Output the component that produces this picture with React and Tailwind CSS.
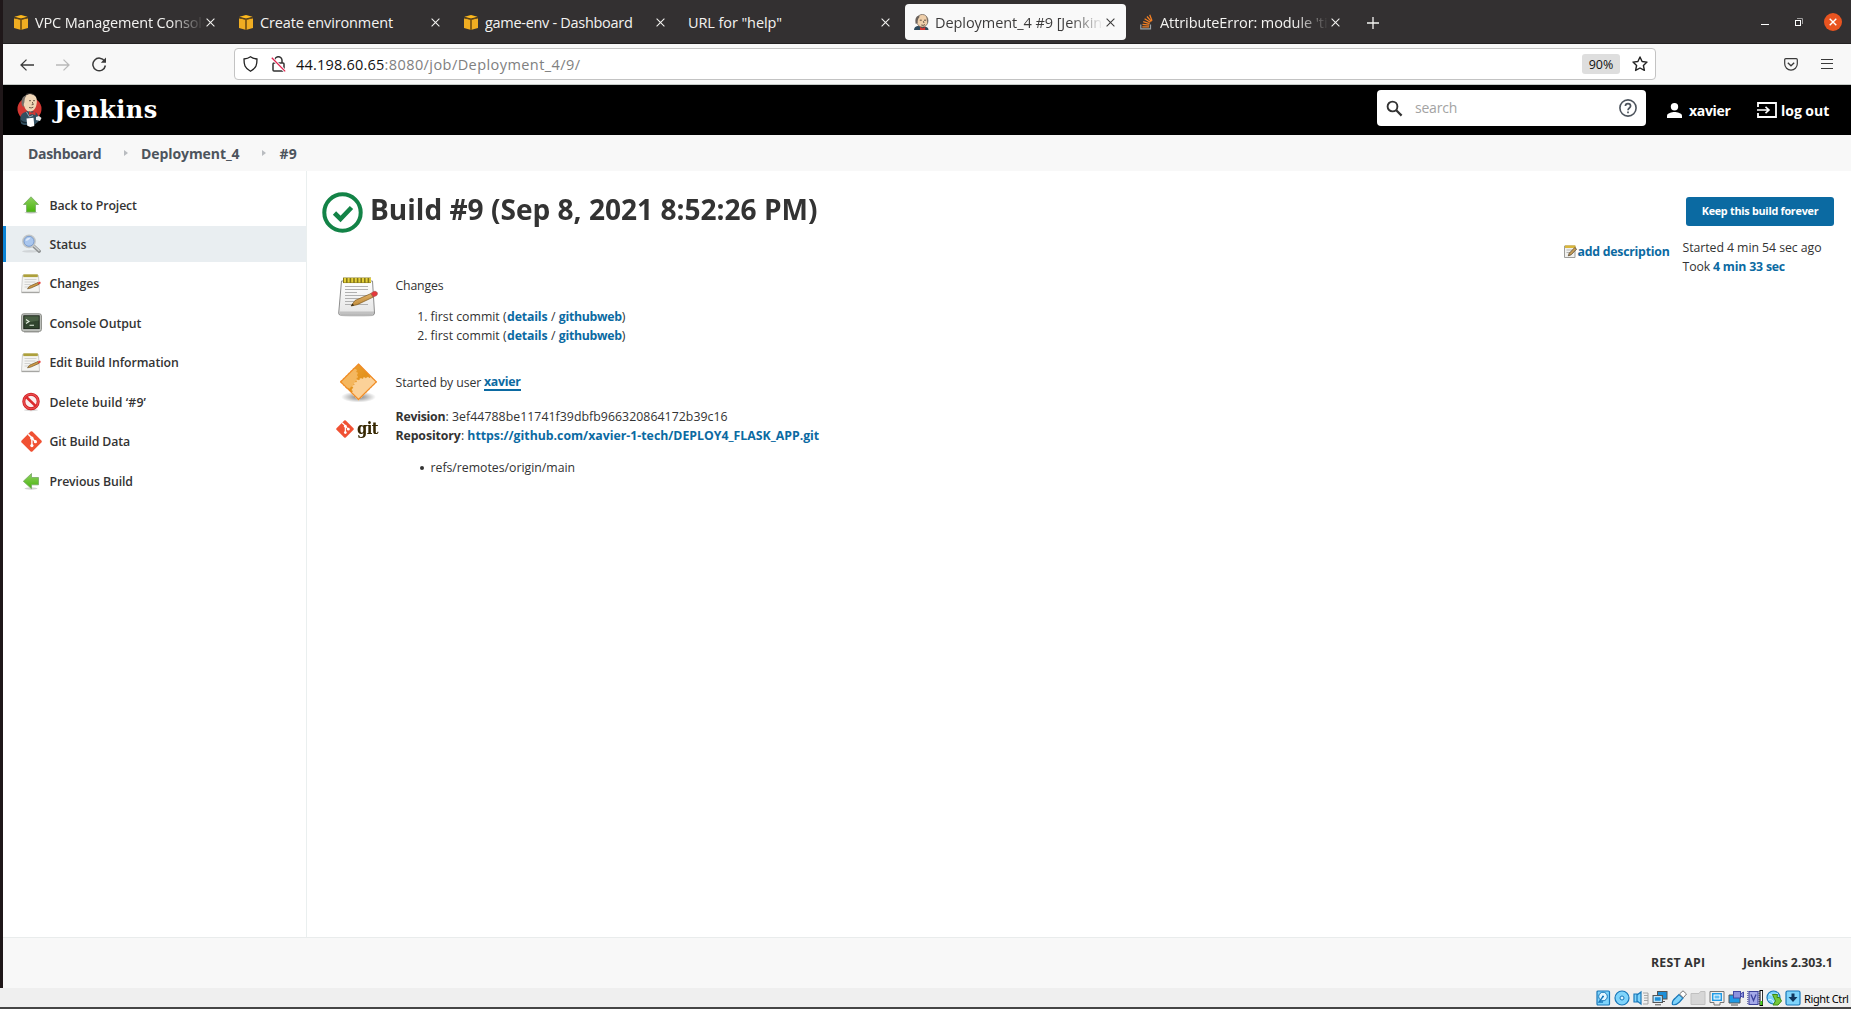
import React from "react";

const AwsCube = () => (
  <svg width="14" height="15" viewBox="0 0 14 15" className="shrink-0">
    <path d="M0 3.2 6.4 4.4v10.4L0 13z" fill="#f0ad22" />
    <path d="M14 3.2 7.6 4.4v10.4L14 13z" fill="#f0ad22" />
    <path d="M7 0l6.6 1.800L7 3.600.4 1.800z" fill="#ffb91c" />
    <path d="M6.200 4.200h1.600V15H6.200z" fill="#8d6010" />
    <path d="M0 2.200 7 4l7-1.800v1L7 4.900 0 3.200z" fill="#6b4a12" />
  </svg>
);

const JenkinsHead = () => (
  <svg width="15" height="16" viewBox="0 0 15 16" className="shrink-0">
    <path d="M0 16c0-2.500 1.500-3.500 3.500-4l7 .5c3 .5 4 1.500 4 3.500z" fill="#2f4a5c" />
    <ellipse cx="8.300" cy="6.800" rx="5.700" ry="6.400" fill="#efcfaa" stroke="#4b4038" strokeWidth=".6" />
    <path d="M5 1.500C1.500 2.300.8 6 1.800 10l1.700-1C3.500 6.500 4 4.500 5.500 3zM12.500 2.500c1.700 2.200 1.600 4.500.8 7L12.800 6z" fill="#6a625c" />
    <path d="M5.800 6.200h2M10 6.200h2M9.300 7.200l.7 1.800M7.300 11q2 .9 3.700-.4" stroke="#3f332b" strokeWidth=".8" fill="none" />
    <path d="M6 13l2.600 1.300 2.600-1.300v3H6z" fill="#d33833" />
  </svg>
);

const JenkinsLogo = () => (
  <svg width="25" height="34" viewBox="0 0 25 34" className="shrink-0">
    <ellipse cx="12.500" cy="16" rx="12" ry="11.500" fill="#d33833" />
    <path d="M4.500 31c-2-4-1.500-9 1.500-11l6-2.500 6 1.500c3.500 2 4 5 3.500 9.500L17 32H7z" fill="#335061" />
    <path d="M6.500 6c1-3.800 5-5.300 8.300-4.800 4 .8 5.500 4 5 8.300-.5 5-2.300 8-6 9-3 .5-5.800-2-6.500-5.300C5.800 12 5.200 8.500 6.500 6z" fill="#f0d6b7" />
    <path d="M8.500 2.500C4.500 4 4 8 5 12.500L7 14.500c-.3-2-.5-3.500.3-5C7.800 7 7.500 4.500 9.500 2.800z" fill="#77706a" />
    <path d="M9 1.500c3-1.600 7.500-1 9.500 2" stroke="#5b5450" strokeWidth=".7" fill="none" />
    <path d="M12 7.700h2M16 7.700h2M15.300 9l1 2.500-1.700.3M12 14.500q2.300 1 4.300-.3" stroke="#4b382c" strokeWidth=".8" fill="none" />
    <path d="M12 18.300l3 1.400 3.500-1.500v4l-3.500-1.200-3 1.300z" fill="#d33833" />
    <path d="M9.500 19l3 5 3.500-1.500" stroke="#c7d0d5" strokeWidth=".7" fill="none" />
    <path d="M9.500 25.500l7-.8.8 8.300-4 1-3-1.200z" fill="#fff" />
    <path d="M19 24l3-1 2.500 2-1.500 3-4-1z" fill="#e9eef0" />
    <path d="M3 27c2 2 4 3 6.500 2.500" stroke="#17262f" strokeWidth="1.100" fill="none" />
  </svg>
);

const StackOverflow = () => (
  <svg width="13" height="16" viewBox="0 0 13 16" className="shrink-0">
    <path d="M.8 10.500v4.300h9.700v-4.300" fill="none" stroke="#9aa3a8" strokeWidth="1.200" />
    <path d="M2.300 12.800h6.700M2.500 10.400l6.700.8M3.200 7.600l6.400 2M4.600 4.800l5.700 3.500M7 2.500l4.400 5M9.700.7l2.300 6" stroke="#f48024" strokeWidth="1.300" fill="none" />
  </svg>
);

const Cross = ({ className }) => (
  <svg width="9" height="9" viewBox="0 0 9 9" className={className}>
    <path d="M.6.6l7.800 7.800M8.400.6L.6 8.400" stroke="currentColor" strokeWidth="1.050" fill="none" />
  </svg>
);

const Tab = ({ icon, children, active, text }) => (
  <div className="flex h-9 w-[225px] shrink-0 pr-1">
    <div className={"flex w-[221px] items-center rounded " + (active ? "bg-[#f9f9f9] text-[#3d3c3c] " : "text-[#f4f3f1] ") + (icon ? "pl-[9px]" : "pl-[8px]")}>
      {icon && <span className="mr-[7px] flex w-[14px] justify-center">{icon}</span>}
      <span className={"min-w-0 flex-1 overflow-hidden pt-[2px] text-[14.5px] leading-5 whitespace-nowrap " + text}>{children}</span>
      <Cross className="mr-[11px] ml-[2px] shrink-0" />
    </div>
  </div>
);

const FADE = "[mask-image:linear-gradient(to_right,black_80%,transparent_100%)]";

const Notepad = ({ size }) => (
  <svg width={size} height={size} viewBox="0 0 40 40" className="block shrink-0">
    <defs>
      <linearGradient id="paper" x1="0" y1="0" x2="0" y2="1">
        <stop offset="0" stopColor="#ffffff" />
        <stop offset="1" stopColor="#e4e4e4" />
      </linearGradient>
      <linearGradient id="pencil" x1="0" y1="0" x2=".4" y2="1">
        <stop offset="0" stopColor="#f0c584" />
        <stop offset="1" stopColor="#bb8530" />
      </linearGradient>
    </defs>
    <ellipse cx="19" cy="38.500" rx="17" ry="1.300" fill="#000" opacity=".12" />
    <path d="M3.500 4h31l2 32q0 2-2 2H2.500q-2 0-1.800-2z" fill="url(#paper)" stroke="#8d8d8d" strokeWidth="1" />
    <path d="M1.500 34.500h34.500v2.500H1.500z" fill="#a8a8a8" opacity=".6" />
    <path d="M7 9.500h23M7 12.500h23M7 15.500h12M7 18.500h23M7 21.500h17M7 24.500h10M7 27.500h23" stroke="#a8a8a8" strokeWidth=".9" />
    <path d="M5 3.300h28" stroke="#857719" strokeWidth="5.500" />
    <path d="M6 3.300h27" stroke="#e3cf3a" strokeWidth="4.500" strokeDasharray="2 1.600" />
    <path d="M13 29l4-5.500 16-7 2.200 3.600-16 7.600z" fill="url(#pencil)" stroke="#80591c" strokeWidth=".7" />
    <path d="M13 29l1.700-2.400 1.300 1.900z" fill="#2d2517" />
    <path d="M33 16.300l2.500-1.700c2-1 4 .3 4 2.300l-.8 1.600-3.500 1.500z" fill="#e5383b" stroke="#9d5a50" strokeWidth=".6" />
  </svg>
);

const SmallNotepad = () => (
  <svg width="20" height="20" viewBox="0 0 20 20" className="block shrink-0">
    <path d="M1.500 1.500h16l1 16.500H.5z" fill="#f4f4f2" stroke="#c2c2c0" strokeWidth=".8" />
    <path d="M.5 18.600h18" stroke="#a3a3a0" strokeWidth="1.100" />
    <path d="M2.300 1.700h14.500" stroke="#ada03c" strokeWidth="2.800" />
    <path d="M3.500 5.500h12M3.500 8h11M3.500 10.500h6M3.500 13h4" stroke="#c9c9c6" strokeWidth=".8" />
    <path d="M6.500 14.800l2-2.600 8.500-3.700 1 1.900-8.200 3.700z" fill="#cf9a45" stroke="#6f5426" strokeWidth=".7" />
    <path d="M17 8.400l2-.9q1 .8.600 2l-1.800.9z" fill="#e8403c" />
  </svg>
);

const GreenArrow = ({ left }) => (
  <svg width="20" height="20" viewBox="0 0 20 20" className="block shrink-0">
    <defs>
      <linearGradient id="green" x1="0" y1="0" x2="0" y2="1">
        <stop offset="0" stopColor="#8fd060" />
        <stop offset="1" stopColor="#48b50c" />
      </linearGradient>
    </defs>
    <ellipse cx="10" cy="17.500" rx="6.500" ry="1.200" fill="#000" opacity=".18" />
    {left ? (
      <path d="M2.300 10.300L10.500 2.500v4h7v7.300h-7v3.900z" fill="url(#green)" stroke="#77a865" strokeWidth=".8" />
    ) : (
      <path d="M10 1.800l7.500 7.700H14.500v7.500H5.500V9.500H2.500z" fill="url(#green)" stroke="#77a865" strokeWidth=".8" />
    )}
  </svg>
);

const Magnifier = () => (
  <svg width="20" height="20" viewBox="0 0 20 20" className="block shrink-0">
    <ellipse cx="9" cy="17.300" rx="8" ry="1.300" fill="#000" opacity=".1" />
    <path d="M12.500 12l5.700 5.200" stroke="#8e9192" strokeWidth="3.400" strokeLinecap="round" />
    <path d="M13 12l5 4.600" stroke="#cfd2d2" strokeWidth="1.300" strokeLinecap="round" />
    <circle cx="8" cy="7.300" r="6" fill="#a9c6ee" stroke="#c3c6c6" strokeWidth="1.800" />
    <circle cx="8" cy="7.300" r="5" fill="none" stroke="#6f93c9" strokeWidth=".8" />
    <path d="M4.500 7c.5-2.500 2.500-3.600 5-3.200-1 2-3 3.200-5 3.200z" fill="#dce9fa" />
  </svg>
);

const Terminal = () => (
  <svg width="21" height="20" viewBox="0 0 21 20" className="block shrink-0">
    <rect x=".6" y=".8" width="19.800" height="17.600" rx="2" fill="#c4c6c2" stroke="#888a85" strokeWidth="1" />
    <path d="M3 19.300h15" stroke="#9a9a98" strokeWidth="1" opacity=".6" />
    <rect x="2.800" y="2.800" width="15.400" height="12.800" fill="#31442e" stroke="#1d261b" strokeWidth="1" />
    <path d="M3.300 3.300h14.400v4.200L3.300 10z" fill="#587052" opacity=".6" />
    <path d="M5 6.500l3 2-3 2M8.500 12.300h4.500" stroke="#e6efe2" strokeWidth="1.100" fill="none" />
  </svg>
);

const Forbidden = () => (
  <svg width="20" height="20" viewBox="0 0 20 20" className="block shrink-0">
    <ellipse cx="10" cy="18" rx="7" ry="1.200" fill="#000" opacity=".15" />
    <circle cx="10" cy="9.500" r="7.200" fill="#fbeeee" stroke="#c9171b" strokeWidth="3" />
    <circle cx="10" cy="9.500" r="7.200" fill="none" stroke="#e94a4c" strokeWidth="1.600" />
    <path d="M5 4.800l10 9.600" stroke="#dc2a2d" strokeWidth="2.600" />
  </svg>
);

const GitMark = ({ size }) => (
  <svg width={size} height={size} viewBox="0 0 21 21" className="block shrink-0">
    <path d="M9.600.6q.9-.8 1.800 0l9 9q.8.900 0 1.800l-9 9q-.9.800-1.800 0l-9-9q-.8-.9 0-1.800z" fill="#f05133" />
    <path d="M7.200 3.200l3.700 3.700v7.800M10.900 7.200l3.400 3.400" stroke="#fff" strokeWidth="1.400" fill="none" />
    <circle cx="10.900" cy="7.200" r="1.600" fill="#fff" />
    <circle cx="10.900" cy="14.600" r="1.600" fill="#fff" />
    <circle cx="14.400" cy="10.700" r="1.600" fill="#fff" />
  </svg>
);

const OrangeDiamond = () => (
  <svg width="37" height="40" viewBox="0 0 36 40" preserveAspectRatio="none" className="block shrink-0">
    <defs>
      <linearGradient id="amber" x1="0" y1="0" x2="1" y2="1">
        <stop offset="0" stopColor="#f0a63c" />
        <stop offset=".5" stopColor="#e3921c" />
        <stop offset="1" stopColor="#efa84c" />
      </linearGradient>
      <radialGradient id="shade">
        <stop offset="0" stopColor="#000" stopOpacity=".5" />
        <stop offset="1" stopColor="#000" stopOpacity="0" />
      </radialGradient>
    </defs>
    <ellipse cx="18" cy="34" rx="17" ry="5.500" fill="url(#shade)" />
    <path d="M18 1l17.300 17.800L18 36.500.7 18.800z" fill="url(#amber)" />
    <path d="M.7 18.800L14 5.200c3 3 3.500 9 1 13.500-2 4-5 6.300-8.300 6.300z" fill="#f4b75f" stroke="#f4b75f" strokeWidth="1.600" strokeDasharray="2 1.400" />
    <path d="M12.500 31c-1-6 1.500-12 7-14.500 4-1.800 8-1.500 11.200-1.500l4.600 3.800L18 36.500z" fill="#fbd198" stroke="#fbd198" strokeWidth="1.800" strokeDasharray="2 1.400" />
    <path d="M18 1l17.300 17.800L18 36.500.7 18.800z" fill="none" stroke="#f08a24" strokeWidth="1.200" />
  </svg>
);

const EditIcon = () => (
  <svg width="13" height="13" viewBox="0 0 13 13" className="mt-[3px] block shrink-0">
    <path d="M.5 1h10.500v11.500H.5z" fill="#f1f1ef" stroke="#9d9d9a" />
    <path d="M1 1.700h10.500" stroke="#d9b63c" strokeWidth="2.600" />
    <path d="M2.500 5h6M2.500 7.500h4" stroke="#b5b5b2" />
    <path d="M4.300 10.800l1-2.600L10.800 2.500l1.800 1.600-5.500 5.700z" fill="#c9a15a" stroke="#54412a" strokeWidth=".8" />
  </svg>
);

const SIDE = [
  [<GreenArrow />, "Back to Project", "tracking-[-0.11px]"],
  [<Magnifier />, "Status", "tracking-[-0.07px]", true],
  [<SmallNotepad />, "Changes", "tracking-[-0.13px]"],
  [<Terminal />, "Console Output", "tracking-[-0.09px]"],
  [<SmallNotepad />, "Edit Build Information", "tracking-[-0.08px]"],
  [<Forbidden />, "Delete build ‘#9’", "tracking-[0.11px]"],
  [<GitMark size={21} />, "Git Build Data", "tracking-[-0.12px]"],
  [<GreenArrow left />, "Previous Build", "tracking-[-0.11px]"],
];

const Link = ({ className = "", children }) => <a className={"font-bold text-[#0b6aa2] " + className}>{children}</a>;

const Commit = ({ n }) => (
  <li className="flex h-[19px] whitespace-pre">
    <span className="w-[35px] pr-[3px] text-right">{n}.</span>
    <span className="w-[76.500px]">first commit (</span>
    <Link className="w-[40.500px] tracking-[-0.15px]">details</Link>
    <span className="w-[11.300px] text-center">/</span>
    <Link className="w-[63px] tracking-[-0.28px]">githubweb</Link>
    <span>)</span>
  </li>
);

const VBoxIcons = () => {
  const s = { fill: "#7fd4fb", stroke: "#1877b9", strokeWidth: 1.2 };
  return (
    <div className="flex h-4 shrink-0 gap-[3px]">
      <svg width="16" height="16" viewBox="0 0 16 16">
        <rect x="2" y="1" width="12.500" height="14" rx="1" {...s} />
        <circle cx="8" cy="6.500" r="4.300" fill="#e3f6ff" stroke="#1877b9" />
        <path d="M8 6.500l-4 5.500h4M7 6.500h2" stroke="#1877b9" strokeWidth="1.300" fill="none" />
      </svg>
      <svg width="16" height="16" viewBox="0 0 16 16">
        <circle cx="8" cy="8" r="7" {...s} />
        <circle cx="8" cy="8" r="2" fill="#dff5ff" stroke="#1877b9" />
      </svg>
      <svg width="16" height="16" viewBox="0 0 16 16">
        <path d="M10 3h5v11h-5M11 5.500h4M11 8h4M11 10.500h4" fill="none" stroke="#a5a5a5" />
        <path d="M1 4h3v8H1zM4 5l4-3v12l-4-3z" {...s} />
      </svg>
      <svg width="16" height="16" viewBox="0 0 16 16">
        <rect x="5.500" y="1.500" width="9.500" height="7.500" fill="#1d8fd8" stroke="#555" />
        <path d="M9 11.500h4" stroke="#555" />
        <rect x="1" y="5.500" width="9.500" height="7" fill="#1d8fd8" stroke="#555" />
        <rect x="2.200" y="6.700" width="7" height="4.600" fill="none" stroke="#e9f7ff" />
        <path d="M3 14.800h6" stroke="#555" />
      </svg>
      <svg width="16" height="16" viewBox="0 0 16 16">
        <path d="M1.500 14.500c-1-3 1-5 3.500-7l3-3L12 8l-3.500 4c-2 2-4 3.500-7 2.500z" {...s} />
        <path d="M8.500 4L12 .8 15.500 4 12.300 7.800z" fill="#fff" stroke="#777" />
      </svg>
      <svg width="16" height="16" viewBox="0 0 16 16">
        <path d="M1 3.500h8l1.500-2H15v13H1z" fill="#d6d6d6" stroke="#c0c0c0" />
      </svg>
      <svg width="16" height="16" viewBox="0 0 16 16">
        <path d="M1 1.500h14v11H11v2.500H5v-2.500H1z" fill="#efefef" stroke="#777" />
        <rect x="3" y="3" width="10" height="8" fill="#1f9be6" />
        <rect x="5" y="5" width="6" height="4" fill="#5fbff5" stroke="#fff" />
      </svg>
      <svg width="16" height="16" viewBox="0 0 16 16">
        <path d="M1 5h11v8H1zM3 15h7" fill="#1f9be6" stroke="#555" />
        <rect x="5.500" y="1.500" width="7" height="6.500" fill="#8c92de" stroke="#4348a5" />
        <path d="M12.500 4l3-2v5.500l-3-1.500z" fill="#8c92de" stroke="#4348a5" />
      </svg>
      <svg width="16" height="16" viewBox="0 0 16 16">
        <rect x="2" y="1.500" width="9" height="13" fill="#a5a9e8" stroke="#3d429c" />
        <path d="M.8 1v14M12 1v14" stroke="#3d429c" strokeDasharray="1 1" />
        <path d="M4 4.500l2.500 6 2.500-6" stroke="#3d429c" strokeWidth="1.300" fill="none" />
        <rect x="13" y=".5" width="2.700" height="15" fill="#fff" stroke="#000" />
        <path d="M14.400 11v4" stroke="#3fd60e" strokeWidth="1.800" />
      </svg>
      <svg width="16" height="16" viewBox="0 0 16 16">
        <circle cx="7.500" cy="7.500" r="6.500" {...s} />
        <path d="M3 4q4 3 9-1M2 10q4-2 6 3" stroke="#d9f2ff" fill="none" />
        <path d="M6.500 4.500h5l-.5 3 2.500 0 2 3.500-3.500 4H7l2.500-4z" fill="#74c83a" stroke="#3c8a14" />
      </svg>
      <svg width="16" height="16" viewBox="0 0 16 16">
        <rect x="1" y="1" width="14" height="14" rx="1.500" {...s} />
        <path d="M6.500 3.500h3V7h3L8 12 3.500 7h3z" fill="#12365c" />
      </svg>
    </div>
  );
};

export default function App() {
  return (
    <div className="flex h-[1009px] w-[1851px] flex-col overflow-hidden bg-[#efefef] font-['Open_Sans','Noto_Sans',sans-serif] text-[12.3px] leading-[19px] text-[#333]">
      <div className="flex h-[988px]">
        <div className="w-[3px] bg-[#1f1719]" />
        <div className="flex min-w-0 flex-1 flex-col bg-white">
          {/* Tab strip */}
          <div className="flex h-11 items-start border-b border-[#232122] bg-[#333031] pt-1 pl-[2px] text-[#f4f3f1]">
            <Tab icon={<AwsCube />} text={"tracking-[-0.14px] " + FADE}>VPC Management Console</Tab>
            <Tab icon={<AwsCube />} text="tracking-[-0.14px]">Create environment</Tab>
            <Tab icon={<AwsCube />} text="tracking-[-0.3px]">game-env - Dashboard</Tab>
            <Tab text="tracking-[-0.09px]">URL for "help"</Tab>
            <Tab icon={<JenkinsHead />} active text={"tracking-[-0.06px] " + FADE}>Deployment_4 #9 [Jenkins]</Tab>
            <Tab icon={<StackOverflow />} text={"tracking-[-0.09px] " + FADE}>AttributeError: module 'time'</Tab>
            <svg width="12" height="12" viewBox="0 0 12 12" className="mt-[13px] ml-[12px]">
              <path d="M6 0v12M0 6h12" stroke="currentColor" strokeWidth="1.300" />
            </svg>
            <div className="mt-[9px] mr-[9px] ml-auto flex items-center">
              <span className="mt-[4px] mr-[26px] h-px w-2 bg-white" />
              <svg width="8" height="8" viewBox="0 0 8 8" className="mr-[21px]">
                <path d="M2 .5h5.500V6" stroke="#a09e9e" fill="none" />
                <rect x=".5" y="2.500" width="5" height="5" stroke="#fff" fill="none" />
              </svg>
              <span className="flex size-[18px] items-center justify-center rounded-full bg-[#e95420]">
                <svg width="8" height="8" viewBox="0 0 8 8"><path d="M.7.7l6.600 6.600M7.300.7L.7 7.300" stroke="#fff" strokeWidth="1.400" /></svg>
              </span>
            </div>
          </div>

          {/* Toolbar */}
          <div className="flex h-[41px] items-start border-b border-[#c4c9c6] bg-[#f8f8f8] pt-1 pr-[18px] pl-[17px] text-[#3a3a3a]">
            <svg width="14" height="12" viewBox="0 0 14 12" className="mt-[11px] mr-[22px]">
              <path d="M14 6H1M6.500.6L1 6l5.500 5.400" stroke="currentColor" strokeWidth="1.300" fill="none" />
            </svg>
            <svg width="14" height="12" viewBox="0 0 14 12" className="mt-[11px] mr-[22px] text-[#b9b9b9]">
              <path d="M0 6h13M7.500.6L13 6l-5.500 5.400" stroke="currentColor" strokeWidth="1.300" fill="none" />
            </svg>
            <svg width="15" height="15" viewBox="0 0 15 15" className="mt-[9px] mr-[127px]">
              <path d="M12.600 4.200A6.300 6.300 0 1 0 13.400 8.500" stroke="currentColor" strokeWidth="1.500" fill="none" />
              <path d="M14 .6v5.200H8.800z" fill="currentColor" />
            </svg>
            <div className="flex h-8 w-[1422px] items-center rounded border border-[#c3c3c3] bg-white pl-2 text-[14.5px]">
              <svg width="15" height="16" viewBox="0 0 15 16" className="mr-[13px] -ml-[0.5px] text-[#222]">
                <path d="M7.500.8c2 1.500 4 2 6.500 2.200 0 5.500-.5 9-6.500 12.200C1.500 12 1 8.500 1 3 3.500 2.800 5.500 2.300 7.500.8z" stroke="currentColor" strokeWidth="1.300" fill="none" />
              </svg>
              <svg width="15" height="16" viewBox="0 0 15 16" className="mr-[10.5px] text-[#333]">
                <path d="M3.800 7V4.300a3.600 3.600 0 0 1 7.200 0V7" stroke="currentColor" strokeWidth="1.500" fill="none" />
                <rect x="2" y="7" width="11" height="8" rx="1" stroke="currentColor" strokeWidth="1.500" fill="none" />
                <path d="M.8 1.800l13.400 13.600" stroke="#fff" strokeWidth="3" />
                <path d="M.8 1.800l13.400 13.600" stroke="#e0224e" strokeWidth="1.300" />
              </svg>
              <span className="w-[88.500px] tracking-[0.2px] text-[#111]">44.198.60.65</span>
              <span className="tracking-[0.43px] text-[#808080]">:8080/job/Deployment_4/9/</span>
              <span className="mr-3 ml-auto flex h-5 w-[38px] items-center justify-center rounded-[3px] bg-[#dedede] text-[12.5px] text-[#111]">90%</span>
              <svg width="16" height="16" viewBox="0 0 16 16" className="mr-[7px] text-[#222]">
                <path d="M8 1l2.100 4.500 4.900.6-3.600 3.400 1 4.900L8 12l-4.400 2.400 1-4.900L1 6.100l4.900-.6z" stroke="currentColor" strokeWidth="1.400" fill="none" strokeLinejoin="round" />
              </svg>
            </div>
            <svg width="14" height="13" viewBox="0 0 14 13" className="mt-[10px] mr-[23px] ml-auto">
              <path d="M1.800.7h10.400q1.100 0 1.100 1.100v4a6.300 6.300 0 0 1-12.600 0v-4q0-1.100 1.100-1.100z" stroke="currentColor" strokeWidth="1.200" fill="none" />
              <path d="M3.800 4.800L7 7.800l3.200-3" stroke="currentColor" strokeWidth="1.300" fill="none" />
            </svg>
            <svg width="12" height="10" viewBox="0 0 12 10" className="mt-[11px]">
              <path d="M0 .5h12M0 4.500h12M0 9.500h12" stroke="currentColor" strokeWidth="1.100" />
            </svg>
          </div>

          {/* Header */}
          <div className="flex h-[50px] items-center bg-black pr-[22px] pl-[14px] text-white">
            <JenkinsLogo />
            <span className="ml-[12px] font-['DejaVu_Serif',serif] text-[24px] leading-8 font-bold tracking-[0.4px]">Jenkins</span>
            <div className="mr-[21px] mb-[4px] ml-auto flex h-9 w-[269px] items-center rounded bg-white pl-[9px] text-[14px] text-[#a3a3a3]">
              <svg width="17" height="17" viewBox="0 0 17 17" className="mr-3 text-[#333]">
                <circle cx="6.500" cy="6.500" r="4.900" stroke="currentColor" strokeWidth="1.900" fill="none" />
                <path d="M10 10l5.600 5.600" stroke="currentColor" strokeWidth="2.200" />
              </svg>
              <span className="pb-[2px] tracking-[-0.22px]">search</span>
              <svg width="18" height="18" viewBox="0 0 18 18" className="mr-[9px] ml-auto text-[#4d545d]">
                <circle cx="9" cy="9" r="8.100" stroke="currentColor" strokeWidth="1.600" fill="none" />
                <path d="M6.400 7.100c0-3.400 5.200-3.400 5.200 0 0 1.900-2.600 2-2.600 4.200M9 12.400v1.800" stroke="currentColor" strokeWidth="1.700" fill="none" />
              </svg>
            </div>
            <svg width="15" height="15" viewBox="0 0 15 15" className="mr-[7px]">
              <circle cx="7.500" cy="3.700" r="3.700" fill="#fff" />
              <path d="M0 15v-2.300c0-2.500 5-3.700 7.500-3.700s7.500 1.200 7.500 3.700V15z" fill="#fff" />
            </svg>
            <span className="w-[68px] text-[14px] font-bold tracking-[-0.32px]">xavier</span>
            <svg width="20" height="16" viewBox="0 0 20 16" className="mr-[4px]">
              <path d="M1 5V1h18v14H1v-4" stroke="#fff" strokeWidth="1.800" fill="none" />
              <path d="M0 8h11M8.500 4.800L12 8l-3.500 3.200" stroke="#fff" strokeWidth="1.600" fill="none" />
            </svg>
            <span className="w-[48px] text-[14px] font-bold tracking-[-0.03px] whitespace-nowrap">log out</span>
          </div>

          {/* Breadcrumbs */}
          <div className="flex h-9 items-center bg-[#f8f8f8] pl-[25px] text-[14px] font-bold text-[#4d545d]">
            <span className="w-[95.500px] tracking-[-0.33px]">Dashboard</span>
            <svg width="4" height="6" viewBox="0 0 4 6" className="mr-[13.500px]"><path d="M0 0l4 3-4 3z" fill="#b9bcc0" /></svg>
            <span className="w-[120.500px] tracking-[-0.08px]">Deployment_4</span>
            <svg width="4" height="6" viewBox="0 0 4 6" className="mr-[14px]"><path d="M0 0l4 3-4 3z" fill="#b9bcc0" /></svg>
            <span className="tracking-[0.3px]">#9</span>
          </div>

          <div className="flex flex-1">
            {/* Side panel */}
            <div className="flex w-[304px] flex-col gap-[3.450px] border-r border-[#eaefef] pt-4">
              {SIDE.map(([icon, label, tr, active]) => (
                <div key={label} className={"flex h-9 items-center border-l-[3px] pl-[15px] font-semibold " + (active ? "border-[#0b84d6] bg-[#e9eef1]" : "border-transparent")}>
                  <span className="flex w-[21px]">{icon}</span>
                  <span className={"ml-[7.500px] " + tr}>{label}</span>
                </div>
              ))}
            </div>

            {/* Main panel */}
            <div className="flex flex-1 justify-between pr-[17px] pl-[14px]">
              <div className="w-[700px] pt-[21px]">
                <div className="flex h-[41px]">
                  <svg width="41" height="41" viewBox="0 0 41 41" className="ml-[0.500px] shrink-0">
                    <ellipse cx="20.500" cy="20.500" rx="18.200" ry="18.300" stroke="#138347" strokeWidth="4" fill="none" />
                    <path d="M12.500 21l6 6L29.500 15.500" stroke="#138347" strokeWidth="4.600" fill="none" />
                  </svg>
                  <h1 className="ml-[7px] h-[41px] origin-left scale-x-[.955] text-[29.400px] leading-[34px] font-bold whitespace-nowrap">Build #9 (Sep 8, 2021 8:52:26 PM)</h1>
                </div>
                <div className="mt-[43px] ml-[16px] grid grid-cols-[58.500px_1fr] gap-y-[18px]">
                  <div className="pt-px pl-[1px]"><Notepad size={40} /></div>
                  <div>
                    <div className="h-[19px] tracking-[-0.17px]">Changes</div>
                    <ol className="mt-3">
                      <Commit n={1} />
                      <Commit n={2} />
                    </ol>
                  </div>
                  <div className="h-[38px] pl-[2.500px]"><OrangeDiamond /></div>
                  <div className="flex h-[38px] items-center">
                    <span className="w-[88.500px] tracking-[-0.1px]">Started by user</span>
                    <Link className="h-[18px] border-b-2 border-[#0b6aa2] leading-[18px] tracking-[-0.25px]">xavier</Link>
                  </div>
                </div>
                <div className="mt-[6px] ml-[15px] grid grid-cols-[59.500px_1fr]">
                  <div className="flex h-[38px] items-start pt-[12.500px]">
                    <GitMark size={18} />
                    <span className="ml-[2.500px] h-4 origin-left scale-x-[.92] pt-[2px] font-['DejaVu_Serif',serif] text-[16px] leading-[13px] font-bold tracking-[-0.6px] text-[#362701]">git</span>
                  </div>
                  <div>
                    <div className="flex h-[19px] whitespace-pre">
                      <span className="w-[50px] font-bold tracking-[-0.24px]">Revision</span>
                      <span className="tracking-[0.05px]">: 3ef44788be11741f39dbfb966320864172b39c16</span>
                    </div>
                    <div className="flex h-[19px] whitespace-pre">
                      <span className="w-[65.500px] font-bold tracking-[-0.1px]">Repository</span>
                      <span className="w-[6.300px]">:</span>
                      <Link>https://github.com/xavier-1-tech/DEPLOY4_FLASK_APP.git</Link>
                    </div>
                    <div className="mt-[13px] flex h-[19px] items-center pl-[24.500px]">
                      <span className="mr-[6.500px] size-1 rounded-full bg-[#333]" />
                      <span className="tracking-[-0.02px]">refs/remotes/origin/main</span>
                    </div>
                  </div>
                </div>
              </div>

              <div className="flex pt-[26px]">
                <div className="mt-[45px] mr-[13px] flex h-[19px]">
                  <EditIcon />
                  <Link className="ml-[1px] tracking-[-0.24px]">add description</Link>
                </div>
                <div className="w-[151.500px]">
                  <button className="ml-[3.500px] block h-[29px] w-[148px] rounded-[3px] bg-[#0b6aa2] pb-[2px] text-center text-[10.8px] font-bold tracking-[-0.26px] text-white">Keep this build forever</button>
                  <div className="mt-[12px] h-[19px] tracking-[-0.06px]">Started 4 min 54 sec ago</div>
                  <div className="flex h-[19px]">
                    <span className="w-[30.500px] tracking-[-0.1px]">Took</span>
                    <Link className="tracking-[-0.19px]">4 min 33 sec</Link>
                  </div>
                </div>
              </div>
            </div>
          </div>

          {/* Footer */}
          <div className="flex h-[51px] items-center border-t border-[#e9ecec] bg-[#f8f8f8] pb-[2px] pl-[1648px] font-bold">
            <span className="w-[92px] tracking-[0.25px]">REST API</span>
            <span className="tracking-[-0.04px]">Jenkins 2.303.1</span>
          </div>
        </div>
      </div>
      {/* Virtual machine status bar */}
      <div className="flex h-[21px] items-center justify-end border-b-2 border-[#454545] bg-[#efefef] pr-[2px]">
        <VBoxIcons />
        <span className="ml-[3px] w-[45px] pt-px font-['Noto_Sans',sans-serif] text-[11px] tracking-[-0.39px] whitespace-nowrap text-black">Right Ctrl</span>
      </div>
    </div>
  );
}
